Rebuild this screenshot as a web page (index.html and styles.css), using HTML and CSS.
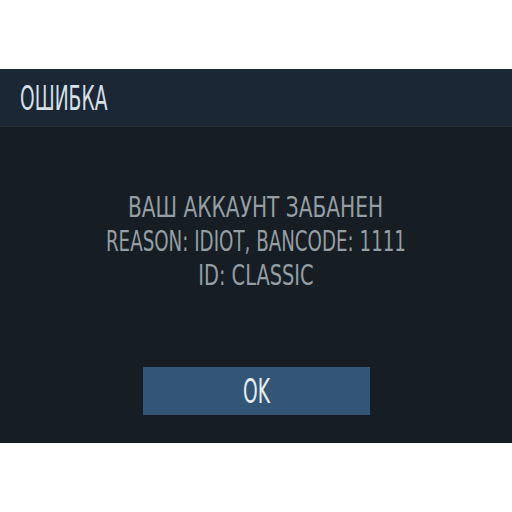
FILE: index.html
```html
<!DOCTYPE html>
<html lang="ru">
<head>
    <meta charset="UTF-8">
    <title>Ошибка</title>
    <link rel="stylesheet" href="styles.css">
</head>
<body>
    <div class="dialog">
        <div class="dialog-head">
            <span class="head-title">ОШИБКА</span>
        </div>
        <div class="dialog-body">
            <div class="msg">
                <div class="msg-line"><span class="narrow wide">ВАШ АККАУНТ ЗАБАНЕН</span></div>
                <div class="msg-line"><span class="narrow tight">REASON: IDIOT, BANCODE: 1111</span></div>
                <div class="msg-line"><span class="narrow">ID: CLASSIC</span></div>
            </div>
            <div class="btn-ok"><span class="ok-label">OK</span></div>
        </div>
    </div>
</body>
</html>
```

FILE: styles.css
```css
body{
    margin: 0;
    background-color: #fff;
    font-family: "DejaVu Sans Condensed", "DejaVu Sans", sans-serif;
}
.dialog{
    margin-top: 69px;
    height: 374px;
    display: flex;
    flex-direction: column;
    background-color: #161e24;
}
.dialog-head{
    height: 57px;
    border-bottom: 1px solid #232f3a;
    background-color: #1c2736;
    display: flex;
    align-items: center;
    padding-left: 20px;
}
.head-title{
    display: inline-block;
    color: #d5e0e8;
    font-size: 34px;
    transform: scaleX(0.61);
    transform-origin: left center;
}
.dialog-body{
    flex: 1;
    display: flex;
    flex-direction: column;
    align-items: center;
}
.msg{
    margin-top: 64px;
    text-align: center;
    color: #959ea3;
    font-size: 28px;
    line-height: 34px;
}
.narrow{
    display: inline-block;
    transform: scaleX(0.77);
}
.narrow.wide{
    transform: scaleX(0.8);
}
.narrow.tight{
    transform: scaleX(0.725);
}
.btn-ok{
    margin-top: 74px;
    width: 227px;
    height: 48px;
    background-color: #335676;
    color: #e6edf2;
    font-size: 33px;
    display: flex;
    align-items: center;
    justify-content: center;
}
.ok-label{
    display: inline-block;
    transform: scaleX(0.63);
}
```
